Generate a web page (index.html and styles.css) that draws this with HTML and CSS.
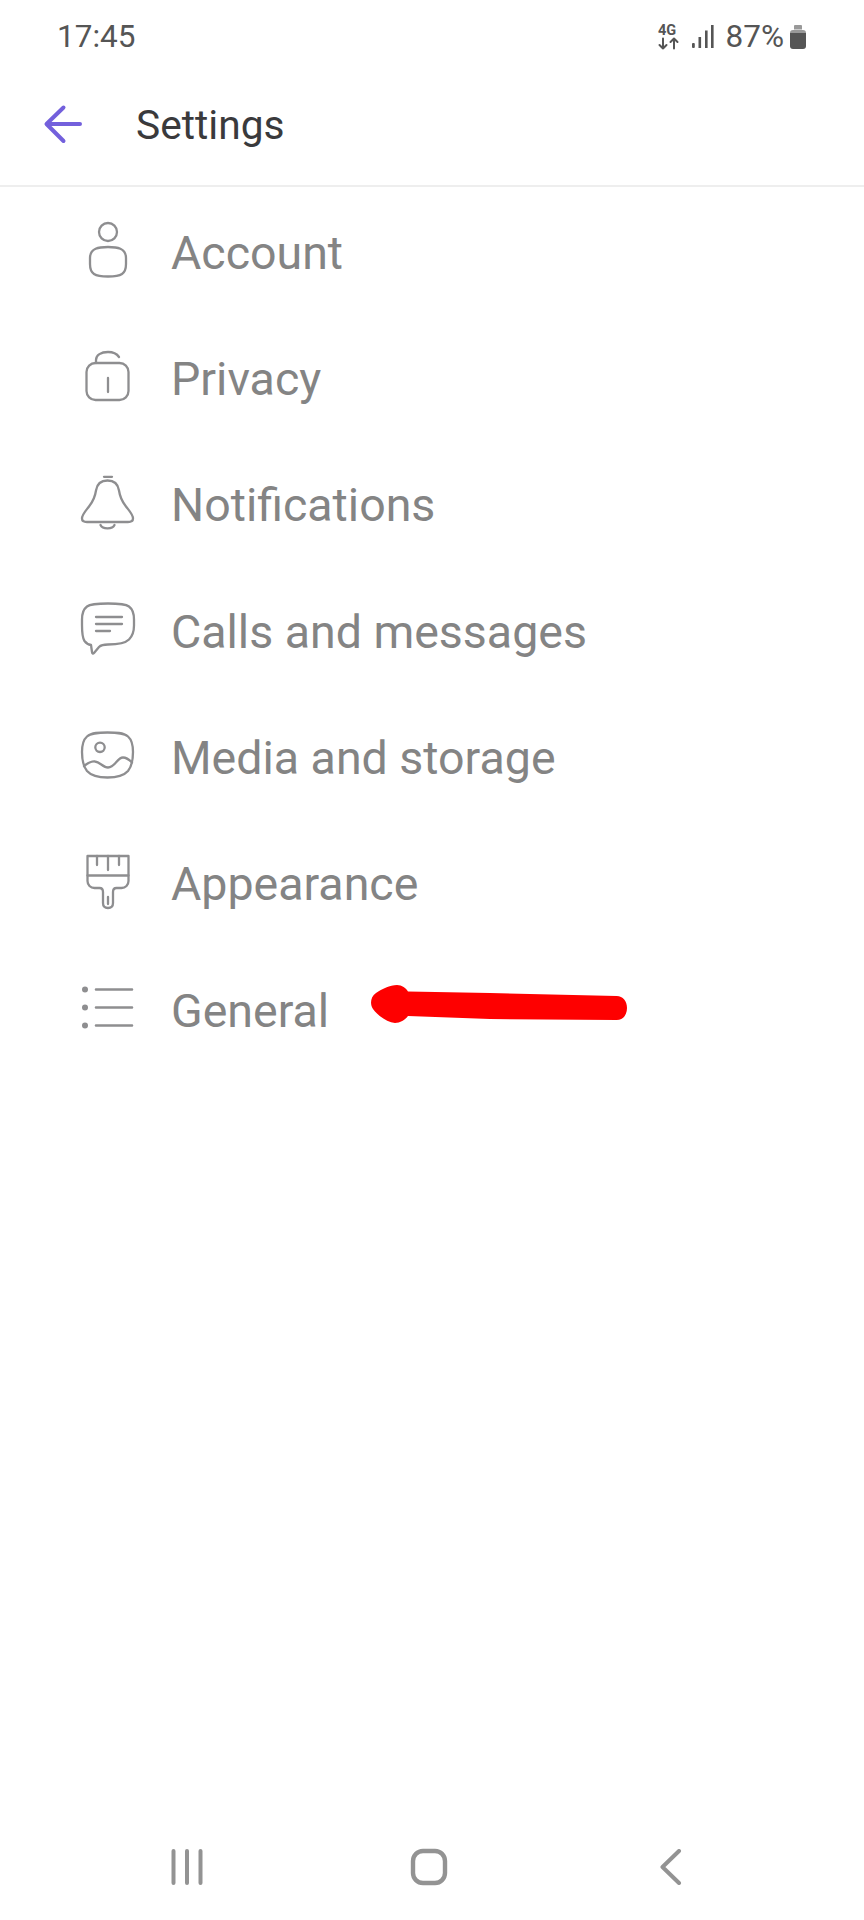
FILE: index.html
```html
<!DOCTYPE html>
<html lang="en">
<head>
<meta charset="utf-8">
<title>Settings</title>
<link rel="stylesheet" href="styles.css">
</head>
<body>
<div class="phone">
  <div class="status">
    <span class="time">17:45</span>
    <div class="status-right">
      <svg class="net" width="22" height="26" viewBox="0 0 22 26"><g fill="none" stroke="#555" stroke-width="2" stroke-linecap="round" stroke-linejoin="round"><path d="M6 14.500v10M2.500 21l3.500 3.500L9.500 21M17 24.500v-10M13.500 18l3.500-3.500 3.500 3.500"/></g><text x="1" y="11" class="net-text">4G</text></svg>
      <svg class="signal" width="22" height="24" viewBox="0 0 22 24"><g fill="#555"><rect x="0" y="18" width="2.800" height="5" rx="1"/><rect x="6.500" y="12" width="2.600" height="11"/><rect x="13" y="5.500" width="2.600" height="17.500"/><rect x="19" y="0" width="2.600" height="23"/></g></svg>
      <span class="pct">87%</span>
      <svg class="battery" width="18" height="26" viewBox="0 0 18 26"><path d="M6 1h6a1 1 0 0 1 1 1v3.500H5V2a1 1 0 0 1 1-1z" fill="#999"/><path d="M1 9a3 3 0 0 1 3-3h10a3 3 0 0 1 3 3z" fill="#999"/><path d="M1 9h16v13a3 3 0 0 1-3 3H4a3 3 0 0 1-3-3z" fill="#555"/></svg>
    </div>
  </div>
  <header class="appbar">
    <svg class="back" width="40" height="40" viewBox="0 0 40 40"><path d="M38 20H5M21.500 3.500L4.500 20l17 17" fill="none" stroke="#7360dc" stroke-width="4" stroke-linecap="round" stroke-linejoin="round"/></svg>
    <h1 class="title">Settings</h1>
  </header>
  <ul class="menu">
    <li class="item">
      <svg class="ico" viewBox="0 0 54 54"><g class="st"><circle cx="27" cy="9" r="9"/><path d="M27 24c9 0 18 1 18 11v6c0 5-1 8-4 10-3 2-9 2.500-14 2.500s-11-.5-14-2.500c-3-2-4-5-4-10v-6c0-10 9-11 18-11z"/></g></svg>
      <span class="label">Account</span>
    </li>
    <li class="item">
      <svg class="ico" viewBox="0 0 54 54"><g class="st"><path d="M15 14V11C15 6 20 3 27 3c5 0 9 2 11 5"/><rect x="5.500" y="14" width="42" height="37" rx="9"/><path d="M27 29v14"/></g></svg>
      <span class="label">Privacy</span>
    </li>
    <li class="item">
      <svg class="ico" viewBox="0 0 54 54"><g class="st"><path d="M23 .8h8"/><path d="M26.500 4.500c-7 0-10.500 3.500-11.500 10-1 7-3 11-7 16-3 4-7 8-7 12 0 3 2 3.500 5 3.500h41c3 0 5-.5 5-3.500 0-4-4-8-7-12-4-5-6-9-7-16-1-6.500-4.500-10-11.500-10z"/><path d="M19.500 49c2 4.500 12 4.500 14 0"/></g></svg>
      <span class="label">Notifications</span>
    </li>
    <li class="item">
      <svg class="ico" viewBox="0 0 54 54"><g class="st"><path d="M27 1.500c8 0 17 0 21 3 4 3 5 8 5 13v6c0 6-1 10-5 14-4 4-13 5-21 5-4 0-7 .5-9 2.500l-5 6c-1 1-2 .5-2-1l-1-7c-3-.5-5-2-6.500-4C1.500 36 1 30 1 23v-5.500c0-5 1-10 5-13 4-3 13-3 21-3z"/><path d="M15 15h26M15 22h26M15 29h14"/></g></svg>
      <span class="label">Calls and messages</span>
    </li>
    <li class="item">
      <svg class="ico" viewBox="0 0 54 54"><g class="st"><path d="M26.500 4.500c8 0 16 0 20.500 4 4 3.500 5 9 5 15.500 0 8-1 14-5 19-4 4.500-12.500 6.500-20.500 6.500S10 47.500 6 43c-4-5-5-11-5-19 0-6.500 1-12 5-15.500 4.500-4 12.500-4 20.500-4z"/><circle cx="19" cy="19.300" r="4.700"/><path d="M3 38c4-3 7-5 11-4.500 5 .5 8 6 13 6 7 0 9-10 15-10 4 0 6 2 9 5"/></g></svg>
      <span class="label">Media and storage</span>
    </li>
    <li class="item">
      <svg class="ico" viewBox="0 0 54 54"><g class="st"><path d="M6.500 1h41v25c0 4-3 7-7 7h-5c-2.500 0-3.500 1.500-3.500 4v11c0 3-2 5-5 5s-5-2-5-5V37c0-2.500-1-4-3.500-4h-5c-4 0-7-3-7-7z"/><path d="M6.500 20.500h41M16 1v9M27 1v14M38 1v9M27 42v7"/></g></svg>
      <span class="label">Appearance</span>
    </li>
    <li class="item">
      <svg class="ico" viewBox="0 0 54 54"><g class="st thick"><path d="M15 8.500h36M15 26.500h36M15 44.500h36"/></g><g class="dots"><circle cx="4" cy="8.500" r="3"/><circle cx="4" cy="26.500" r="3"/><circle cx="4" cy="44.500" r="3"/></g></svg>
      <span class="label">General</span>
      <svg class="scribble" width="258" height="40" viewBox="0 0 258 40"><path d="M6 9C12 5 20 1 27 1c5 0 9 3 11 6.500L120 9l126.700 3C253 12 257 17 257 24s-4 12-10.300 12L120 35l-82-3c-3 4-8 7-13 7-8-1-17-7-22-14C0 21 0 13 6 9z" fill="#fe0000"/></svg>
    </li>
  </ul>
  <nav class="softkeys">
    <svg width="40" height="36" viewBox="0 0 40 36"><path d="M6.500 2v32M20 2v32M33.500 2v32" stroke="#939393" stroke-width="4" stroke-linecap="round" fill="none"/></svg>
    <svg class="key-home" width="38" height="38" viewBox="0 0 38 38"><rect x="3" y="3" width="32" height="32" rx="10" fill="none" stroke="#939393" stroke-width="4.400"/></svg>
    <svg class="key-back" width="24" height="36" viewBox="0 0 24 36"><path d="M20 2L3.500 18 20 34" fill="none" stroke="#939393" stroke-width="4" stroke-linecap="round" stroke-linejoin="round"/></svg>
  </nav>
</div>
</body>
</html>
```

FILE: styles.css
```css
* { box-sizing: border-box; }
html, body { margin: 0; padding: 0; background: #fff; }
.phone {
  width: 864px;
  height: 1920px;
  display: flex;
  flex-direction: column;
  font-family: Roboto, "Liberation Sans", sans-serif;
  background: #fff;
}
.status {
  height: 68px;
  padding: 5px 57px 0 57px;
  display: flex;
  align-items: center;
  justify-content: space-between;
}
.time { font-size: 31.500px; color: #555; }
.status-right { display: flex; align-items: center; }
.net { overflow: visible; }
.net-text { font: 700 14.500px Roboto, sans-serif; fill: #555; }
.signal { margin-left: 13px; }
.pct { font-size: 31.500px; color: #555; margin-left: 12px; }
.battery { margin-left: 5px; }
.appbar {
  height: 119px;
  padding: 0 0 6px 42px;
  display: flex;
  align-items: center;
  border-bottom: 2px solid #eeeeee;
}
.title {
  margin: 3px 0 0 54px;
  font-size: 40.700px;
  font-weight: 400;
  color: #3a3a3c;
}
.menu { list-style: none; margin: 0; padding: 0; }
.item {
  position: relative;
  height: 126.330px;
  padding-left: 81px;
  display: flex;
  align-items: center;
}
.ico { width: 54px; height: 54px; flex: none; overflow: visible; }
.st { fill: none; stroke: #8e8e90; stroke-width: 2.300; stroke-linecap: round; stroke-linejoin: round; }
.thick { stroke-width: 2.600; }
.dots { fill: #8e8e90; }
.label { margin: 5px 0 0 36px; font-size: 46.500px; color: #848484; }
.scribble { position: absolute; left: 370px; top: 39.500px; }
.softkeys {
  margin-top: auto;
  height: 108px;
  padding: 2px 0 0 167px;
  display: flex;
  align-items: center;
}
.key-home { margin-left: 203px; }
.key-back { margin-left: 211px; }
```
